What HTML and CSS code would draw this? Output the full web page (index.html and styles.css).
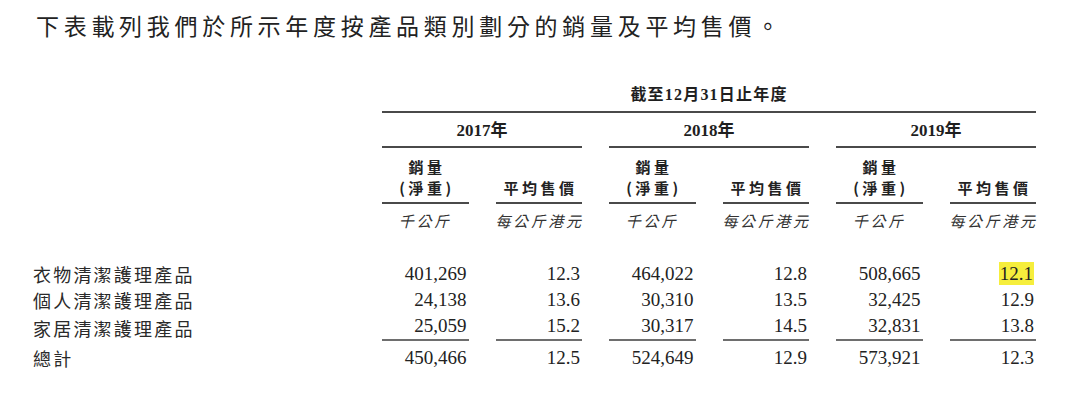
FILE: index.html
```html
<!DOCTYPE html>
<html lang="zh-Hant">
<head>
<meta charset="utf-8">
<link rel="stylesheet" href="styles.css">
</head>
<body>
<p class="title">下表載列我們於所示年度按產品類別劃分的銷量及平均售價。</p>
<div class="table">
  <div class="h-period">截至12月31日止年度</div>

  <div class="h-year y1">2017年</div>
  <div class="h-year y2">2018年</div>
  <div class="h-year y3">2019年</div>

  <div class="h-sub c1"><span>銷量</span><span>(淨重)</span></div>
  <div class="h-sub c2"><span>平均售價</span></div>
  <div class="h-sub c3"><span>銷量</span><span>(淨重)</span></div>
  <div class="h-sub c4"><span>平均售價</span></div>
  <div class="h-sub c5"><span>銷量</span><span>(淨重)</span></div>
  <div class="h-sub c6"><span>平均售價</span></div>

  <div class="unit c1">千公斤</div>
  <div class="unit c2">每公斤港元</div>
  <div class="unit c3">千公斤</div>
  <div class="unit c4">每公斤港元</div>
  <div class="unit c5">千公斤</div>
  <div class="unit c6">每公斤港元</div>

  <div class="label first">衣物清潔護理產品</div>
  <div class="num first">401,269</div>
  <div class="num first">12.3</div>
  <div class="num first">464,022</div>
  <div class="num first">12.8</div>
  <div class="num first">508,665</div>
  <div class="num first"><span class="hl">12.1</span></div>

  <div class="label">個人清潔護理產品</div>
  <div class="num">24,138</div>
  <div class="num">13.6</div>
  <div class="num">30,310</div>
  <div class="num">13.5</div>
  <div class="num">32,425</div>
  <div class="num">12.9</div>

  <div class="label">家居清潔護理產品</div>
  <div class="num last">25,059</div>
  <div class="num last">15.2</div>
  <div class="num last">30,317</div>
  <div class="num last">14.5</div>
  <div class="num last">32,831</div>
  <div class="num last">13.8</div>

  <div class="label total">總計</div>
  <div class="num total">450,466</div>
  <div class="num total">12.5</div>
  <div class="num total">524,649</div>
  <div class="num total">12.9</div>
  <div class="num total">573,921</div>
  <div class="num total">12.3</div>
</div>
</body>
</html>
```

FILE: styles.css
```css
html, body {
  margin: 0;
  padding: 0;
  background: #ffffff;
}
body {
  width: 1080px;
  height: 404px;
  overflow: hidden;
  color: #1f1f1f;
  font-family: "Noto Sans CJK TC", "Noto Sans CJK SC", sans-serif;
}
.title {
  margin: 0;
  padding: 10px 0 0 36px;
  font-size: 23px;
  line-height: 30px;
  letter-spacing: 4.7px;
  color: #222;
  white-space: nowrap;
}
.table {
  margin-top: 45px;
  padding-left: 33px;
  display: grid;
  grid-template-columns: 322px repeat(6, 86.5px);
  column-gap: 27px;
  align-items: end;
}
.h-period {
  grid-column: 2 / 8;
  text-align: center;
  font-family: "Liberation Serif", "Noto Sans CJK TC", serif;
  font-weight: bold;
  font-size: 16px;
  line-height: 20px;
  letter-spacing: 1.2px;
  padding-bottom: 6px;
  border-bottom: 2px solid #4a4a4a;
}
.h-year {
  text-align: center;
  font-family: "Liberation Serif", "Noto Sans CJK TC", serif;
  font-weight: bold;
  font-size: 17px;
  line-height: 20px;
  padding: 8px 0 5px;
  border-bottom: 2px solid #4a4a4a;
}
.y1 { grid-column: 2 / 4; }
.y2 { grid-column: 4 / 6; }
.y3 { grid-column: 6 / 8; }
.c1 { grid-column: 2; }
.c2 { grid-column: 3; }
.c3 { grid-column: 4; }
.c4 { grid-column: 5; }
.c5 { grid-column: 6; }
.c6 { grid-column: 7; }
.h-sub {
  align-self: stretch;
  display: flex;
  flex-direction: column;
  justify-content: flex-end;
  align-items: center;
  font-weight: bold;
  font-size: 15px;
  line-height: 21px;
  letter-spacing: 3.5px;
  padding: 8px 0 4px;
  border-bottom: 2px solid #4a4a4a;
  color: #222;
  white-space: nowrap;
}
.h-sub span { display: block; margin-right: -3.5px; }
.unit {
  text-align: center;
  font-style: italic;
  font-size: 15px;
  line-height: 20px;
  letter-spacing: 2.6px;
  padding-top: 7px;
  color: #333;
  white-space: nowrap;
}
.label {
  grid-column: 1;
  font-size: 18px;
  line-height: 26px;
  letter-spacing: 2.2px;
  color: #2a2a2a;
  white-space: nowrap;
}
.num {
  text-align: right;
  font-family: "Liberation Serif", serif;
  font-size: 19px;
  line-height: 26px;
  color: #222;
  padding-right: 2px;
}
.first { margin-top: 30px; }
.num.last { border-bottom: 2px solid #6e6e6e; }
.total { padding-top: 4px; }
.hl {
  background: #f6ee3c;
  padding: 1px 1px;
}
```
